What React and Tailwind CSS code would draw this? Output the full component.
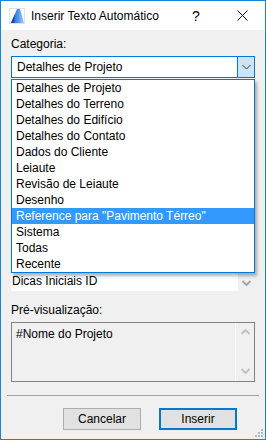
const ITEMS = [
  'Detalhes de Projeto',
  'Detalhes do Terreno',
  'Detalhes do Edifício',
  'Detalhes do Contato',
  'Dados do Cliente',
  'Leiaute',
  'Revisão de Leiaute',
  'Desenho',
  'Reference para "Pavimento Térreo"',
  'Sistema',
  'Todas',
  'Recente',
]

const SELECTED = 8

function AppIcon() {
  return (
    <svg width="16" height="16" viewBox="0 0 16 16">
      <defs>
        <linearGradient id="sail" x1="0" y1="0" x2="1" y2="0">
          <stop offset="0" stopColor="#1a5fc8" />
          <stop offset="0.55" stopColor="#4f95ec" />
          <stop offset="1" stopColor="#a9cdf7" />
        </linearGradient>
      </defs>
      <rect x="0.5" y="0.5" width="15" height="15" fill="#ffffff" stroke="#d6e4f5" />
      <polygon points="2,15 8,1 11,1 15,15" fill="url(#sail)" />
      <polygon points="2,15 6,6 5,15" fill="#0f46a8" />
    </svg>
  )
}

function Chevron({ up, className, strokeWidth = 1.2 }) {
  return (
    <svg width="9" height="6" viewBox="0 0 9 6" className={className}>
      <polyline
        points={up ? '0.5,5 4.5,1 8.5,5' : '0.5,1 4.5,5 8.5,1'}
        fill="none"
        stroke="currentColor"
        strokeWidth={strokeWidth}
      />
    </svg>
  )
}

export default function App() {
  return (
    <div
      className="w-[266px] h-[440px] border border-[#1883d7] bg-[#f0f0f0] flex flex-col text-[12px] leading-[16px] text-black relative"
      style={{ fontFamily: '"Liberation Sans", Arial, sans-serif' }}
    >
      {/* Title bar */}
      <div className="h-[29px] bg-white flex items-center shrink-0">
        <div className="ml-[8px] w-[16px] h-[16px]">
          <AppIcon />
        </div>
        <span className="ml-[6px] text-[12px] flex-1">Inserir Texto Automático</span>
        <span className="w-[46px] text-center text-[14px]">?</span>
        <div className="w-[46px] h-[29px] flex items-center justify-center">
          <svg width="11" height="11" viewBox="0 0 11 11">
            <path d="M0.5 0.5 L10.5 10.5 M10.5 0.5 L0.5 10.5" stroke="#111" strokeWidth="1" />
          </svg>
        </div>
      </div>

      {/* Body */}
      <div className="flex-1 flex flex-col px-[10px] relative">
        <div className="mt-[6px] h-[16px]">Categoria:</div>

        {/* Combobox */}
        <div className="mt-[4px] h-[22px] border border-[#0078d7] bg-white flex">
          <div className="flex-1 pl-[5px] flex items-center">Detalhes de Projeto</div>
          <div className="w-[17px] bg-[#cce4f7] border-l border-[#0078d7] flex items-center justify-center text-[#3c3c3c]">
            <Chevron strokeWidth={1} />
          </div>
        </div>

        {/* Underlying list of fields */}
        <div className="mt-[2px] h-[211px] flex">
          <div className="flex-1 bg-white flex flex-col justify-end">
            <div className="h-[16px] pl-[1px] mb-[2px]">Dicas Iniciais ID</div>
          </div>
          <div className="w-[17px] flex items-end justify-center pb-[5px] text-[#a6a6a6]">
            <Chevron strokeWidth={2} />
          </div>
        </div>

        <div className="mt-[11px] h-[16px]">Pré-visualização:</div>

        {/* Preview */}
        <div className="mt-[4px] h-[60px] border border-[#828282] flex">
          <div className="flex-1 pl-[4px] pt-[3px]">#Nome do Projeto</div>
          <div className="w-[19px] border-l border-white flex flex-col items-center justify-between pt-[6px] pb-[7px] text-[#c2c2c2]">
            <Chevron up strokeWidth={2} />
            <Chevron strokeWidth={2} />
          </div>
        </div>

        <div className="mt-[13px] -mx-[4px] h-px bg-[#a0a0a0]" />

        {/* Buttons */}
        <div className="mt-[12px] flex justify-end gap-[18px] pr-[18px]">
          <button className="w-[78px] h-[22px] border border-[#adadad] bg-[#e1e1e1] flex items-center justify-center">
            Cancelar
          </button>
          <button className="w-[78px] h-[22px] border-2 border-[#0078d7] bg-[#e1e1e1] flex items-center justify-center">
            Inserir
          </button>
        </div>

        {/* Dropdown list (open) */}
        <div className="absolute left-[10px] top-[49px] w-[244px] border border-[#0078d7] bg-white shadow-[2px_3px_3px_rgba(0,0,0,0.3)] flex flex-col">
          {ITEMS.map((item, i) => (
            <div
              key={item}
              className={
                i === SELECTED
                  ? 'h-[16px] pl-[4px] bg-[#3399ff] text-white whitespace-nowrap'
                  : 'h-[16px] pl-[4px] whitespace-nowrap'
              }
            >
              {item}
            </div>
          ))}
        </div>
      </div>

      {/* Resize grip */}
      <div className="absolute right-[2px] bottom-[2px] grid grid-cols-3 gap-px">
        <span className="w-[2px] h-[2px]" />
        <span className="w-[2px] h-[2px]" />
        <span className="w-[2px] h-[2px] bg-[#b8b8b8]" />
        <span className="w-[2px] h-[2px]" />
        <span className="w-[2px] h-[2px] bg-[#b8b8b8]" />
        <span className="w-[2px] h-[2px] bg-[#b8b8b8]" />
        <span className="w-[2px] h-[2px] bg-[#b8b8b8]" />
        <span className="w-[2px] h-[2px] bg-[#b8b8b8]" />
        <span className="w-[2px] h-[2px] bg-[#b8b8b8]" />
      </div>
    </div>
  )
}
